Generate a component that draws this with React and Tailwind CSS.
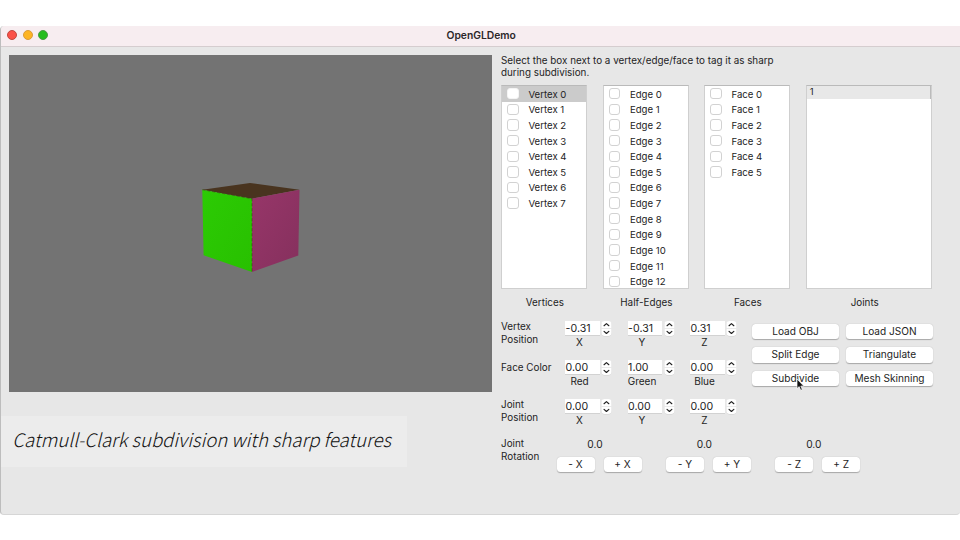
import React from "react";

const vertices = Array.from({ length: 8 }, (_, i) => `Vertex ${i}`);
const edges = Array.from({ length: 13 }, (_, i) => `Edge ${i}`);
const faces = Array.from({ length: 6 }, (_, i) => `Face ${i}`);

function CheckList({ items, label, selected }) {
  return (
    <div className="mr-[15.3px] w-[86.2px] shrink-0">
      <div className="h-[204px] overflow-hidden border border-[#cfcfcf] border-t-[#bababa] bg-white">
        {items.map((name, i) => (
          <div
            key={name}
            className={`flex h-[15.63px] items-center pl-[5px] ${i === selected ? "bg-[#cbcbcb]" : ""}`}
          >
            <span
              className={`size-[11.4px] shrink-0 rounded-[3px] border bg-white ${i === selected ? "border-[#f4f4f4]" : "border-[#d2d2d2]"}`}
            />
            <span className="ml-[9.8px] pt-[1.7px] text-[9.6px] leading-[14px] whitespace-nowrap">{name}</span>
          </div>
        ))}
      </div>
      <div className="mt-[7.2px] pl-[1px] text-center text-[9.9px] leading-[13px]">{label}</div>
    </div>
  );
}

function SpinBox({ value, label }) {
  return (
    <div className="mr-[15.5px] h-[39.2px] w-[47px] shrink-0">
      <div className="flex h-[15.8px] items-start justify-between">
        <div className="h-[14.2px] w-[34.5px] bg-white pl-[0.6px] text-[10.6px] leading-[15.8px] shadow-[0_1px_0_#d2d2d2]">
          {value}
        </div>
        <svg className="-ml-px h-[15.6px] w-[10.9px]" viewBox="0 0 10.4 15.6" fill="none">
          <rect x="0.2" y="0.4" width="10" height="15" rx="3.2" fill="#d0d0d0" />
          <rect x="0.2" y="0" width="10" height="15" rx="3.2" fill="#fff" />
          <path d="M0.2 7.5h10" stroke="#e0e0e0" strokeWidth="0.7" />
          <path d="M2.8 4.7l2.4-2.1 2.4 2.1M2.8 10.4l2.4 2.1 2.4-2.1" stroke="#222" strokeWidth="1.2" strokeLinecap="round" strokeLinejoin="round" />
        </svg>
      </div>
      <div className="-mt-px w-[29px] text-center text-[10px] leading-[12px]">
        <span className="-mx-4 inline-block w-[61px]">{label}</span>
      </div>
    </div>
  );
}

function SpinRow({ title, values, labels, pad }) {
  return (
    <div className="flex h-[39.1px]">
      <div className={`-mt-[0.8px] w-[64px] shrink-0 text-[9.9px] leading-[12.4px] whitespace-pre ${pad}`}>{title}</div>
      {values.map((v, i) => (
        <SpinBox key={labels[i]} value={v} label={labels[i]} />
      ))}
    </div>
  );
}

function PushButton({ children, size = "w-[87px]" }) {
  return (
    <button
      className={`h-[15.4px] rounded-[3.5px] bg-white text-center text-[10.1px] leading-[15px] whitespace-nowrap shadow-[0_0.6px_1px_rgba(0,0,0,0.28)] ${size}`}
    >
      {children}
    </button>
  );
}

function Rotation({ axis }) {
  return (
    <div className="w-[109.4px] shrink-0">
      <div className="w-[77px] text-center text-[10.2px] leading-[13px]">0.0</div>
      <div className="mt-[5.3px] flex gap-[9px]">
        <PushButton size="w-[38px]">- {axis}</PushButton>
        <PushButton size="w-[38px]">+ {axis}</PushButton>
      </div>
    </div>
  );
}

function Cube() {
  return (
    <svg className="h-[337px] w-[483px]" viewBox="9 55 483 337">
      <defs>
        <linearGradient id="side" x1="0" y1="0" x2="1" y2="1">
          <stop offset="0" stopColor="#973669" />
          <stop offset="1" stopColor="#85305d" />
        </linearGradient>
        <linearGradient id="front" x1="0" y1="0" x2="1" y2="1">
          <stop offset="0" stopColor="#2ccb04" />
          <stop offset="1" stopColor="#28c000" />
        </linearGradient>
      </defs>
      <path d="M202.3 189.7L250 183L299.5 189.8L252 198.7Z" fill="#49341f" />
      <path d="M202.3 189.7L252 198.7V272L203.6 255.2Z" fill="url(#front)" />
      <path d="M252 198.7L299.5 189.8L298.3 255.5L252 272Z" fill="url(#side)" />
      <path d="M202.3 189.7L252 198.7V272" fill="none" stroke="#3a4a10" strokeWidth="0.6" strokeDasharray="3 2" />
    </svg>
  );
}

export default function App() {
  return (
    <div className="h-[540px] w-[960px] overflow-hidden bg-white pt-[25.5px] font-['Inter','Liberation_Sans',sans-serif] text-[#242424]">
      <div className="flex h-[489px] flex-col overflow-hidden rounded-b-[4px] rounded-tl-[4px] border-b border-l border-b-[#d6d6d6] border-l-[#bdbdbd] bg-[#e7e7e7]">
        <header className="flex h-[21px] shrink-0 items-center border-b border-[#d5cdcf] bg-[#f7edf0]">
          <div className="flex w-[445.5px] gap-[5.6px] pb-[1.5px] pl-[6px]">
            <span className="size-[10px] rounded-full border border-[#c0483f] bg-[#fb5148]" />
            <span className="size-[10px] rounded-full border border-[#d99b3a] bg-[#fdb424]" />
            <span className="size-[10px] rounded-full border border-[#4c9a45] bg-[#25bd1d]" />
          </div>
          <h1 className="pb-[1.5px] text-[10.3px] leading-[14px] font-semibold text-[#2c2729]">OpenGLDemo</h1>
        </header>
        <main className="flex min-h-0 flex-1">
          <section className="w-[500px] shrink-0 pt-[8.5px]">
            <div className="ml-[8.4px] h-[337px] w-[483px] bg-[#737373]">
              <Cube />
            </div>
            <div className="mt-[24px] h-[51px] w-[406px] bg-[#ececec] pl-[11.3px] font-['Noto_Sans_CJK_SC','Noto_Sans_CJK_JP',sans-serif] text-[18.6px] leading-[46.4px] font-light whitespace-nowrap text-[#111] italic">
              Catmull-Clark subdivision with sharp features
            </div>
          </section>
          <section className="flex-1 pt-[7px]">
            <p className="text-[9.85px] leading-[12.6px]">
              Select the box next to a vertex/edge/face to tag it as sharp
              <br />
              during subdivision.
            </p>
            <div className="mt-[6.3px] flex pl-[0.3px]">
              <CheckList items={vertices} label="Vertices" selected={0} />
              <CheckList items={edges} label="Half-Edges" />
              <CheckList items={faces} label="Faces" />
              <div className="w-[126px] shrink-0">
                <div className="h-[204px] border border-[#cfcfcf] border-t-[#bababa] bg-white">
                  <div className="h-[13px] border-r border-[#bbb] bg-[#e8e8e8] pl-[3px] text-[9.5px] leading-[12.4px]">1</div>
                </div>
                <div className="mt-[7.2px] pr-[8px] text-center text-[9.9px] leading-[13px]">Joints</div>
              </div>
            </div>
            <div className="mt-[11.8px] flex">
              <div className="w-[251px] shrink-0">
                <SpinRow title={"Vertex\nPosition"} values={["-0.31", "-0.31", "0.31"]} labels={["X", "Y", "Z"]} pad="" />
                <SpinRow title="Face Color" values={["0.00", "1.00", "0.00"]} labels={["Red", "Green", "Blue"]} pad="pt-[1.6px]" />
                <SpinRow title={"Joint\nPosition"} values={["0.00", "0.00", "0.00"]} labels={["X", "Y", "Z"]} pad="" />
              </div>
              <div className="grid h-[63px] grid-cols-[87px_87px] gap-x-[7px] gap-y-[8.2px] pt-[2.6px]">
                <PushButton>Load OBJ</PushButton>
                <PushButton>Load JSON</PushButton>
                <PushButton>Split Edge</PushButton>
                <PushButton>Triangulate</PushButton>
                <div className="relative flex">
                  <PushButton>Subdivide</PushButton>
                  <svg className="absolute top-[7.5px] left-[44px] h-[14px] w-[9px]" viewBox="0 0 9 14">
                    <path d="M1 1v9.6l2.2-2 1.5 3.7 1.6-.7-1.5-3.5h3z" fill="#111" stroke="#fff" strokeWidth="0.7" />
                  </svg>
                </div>
                <PushButton>Mesh Skinning</PushButton>
              </div>
            </div>
            <div className="flex">
              <div className="-mt-[0.8px] w-[55.5px] shrink-0 text-[9.9px] leading-[12.4px]">
                Joint
                <br />
                Rotation
              </div>
              <Rotation axis="X" />
              <Rotation axis="Y" />
              <Rotation axis="Z" />
            </div>
          </section>
        </main>
      </div>
    </div>
  );
}
